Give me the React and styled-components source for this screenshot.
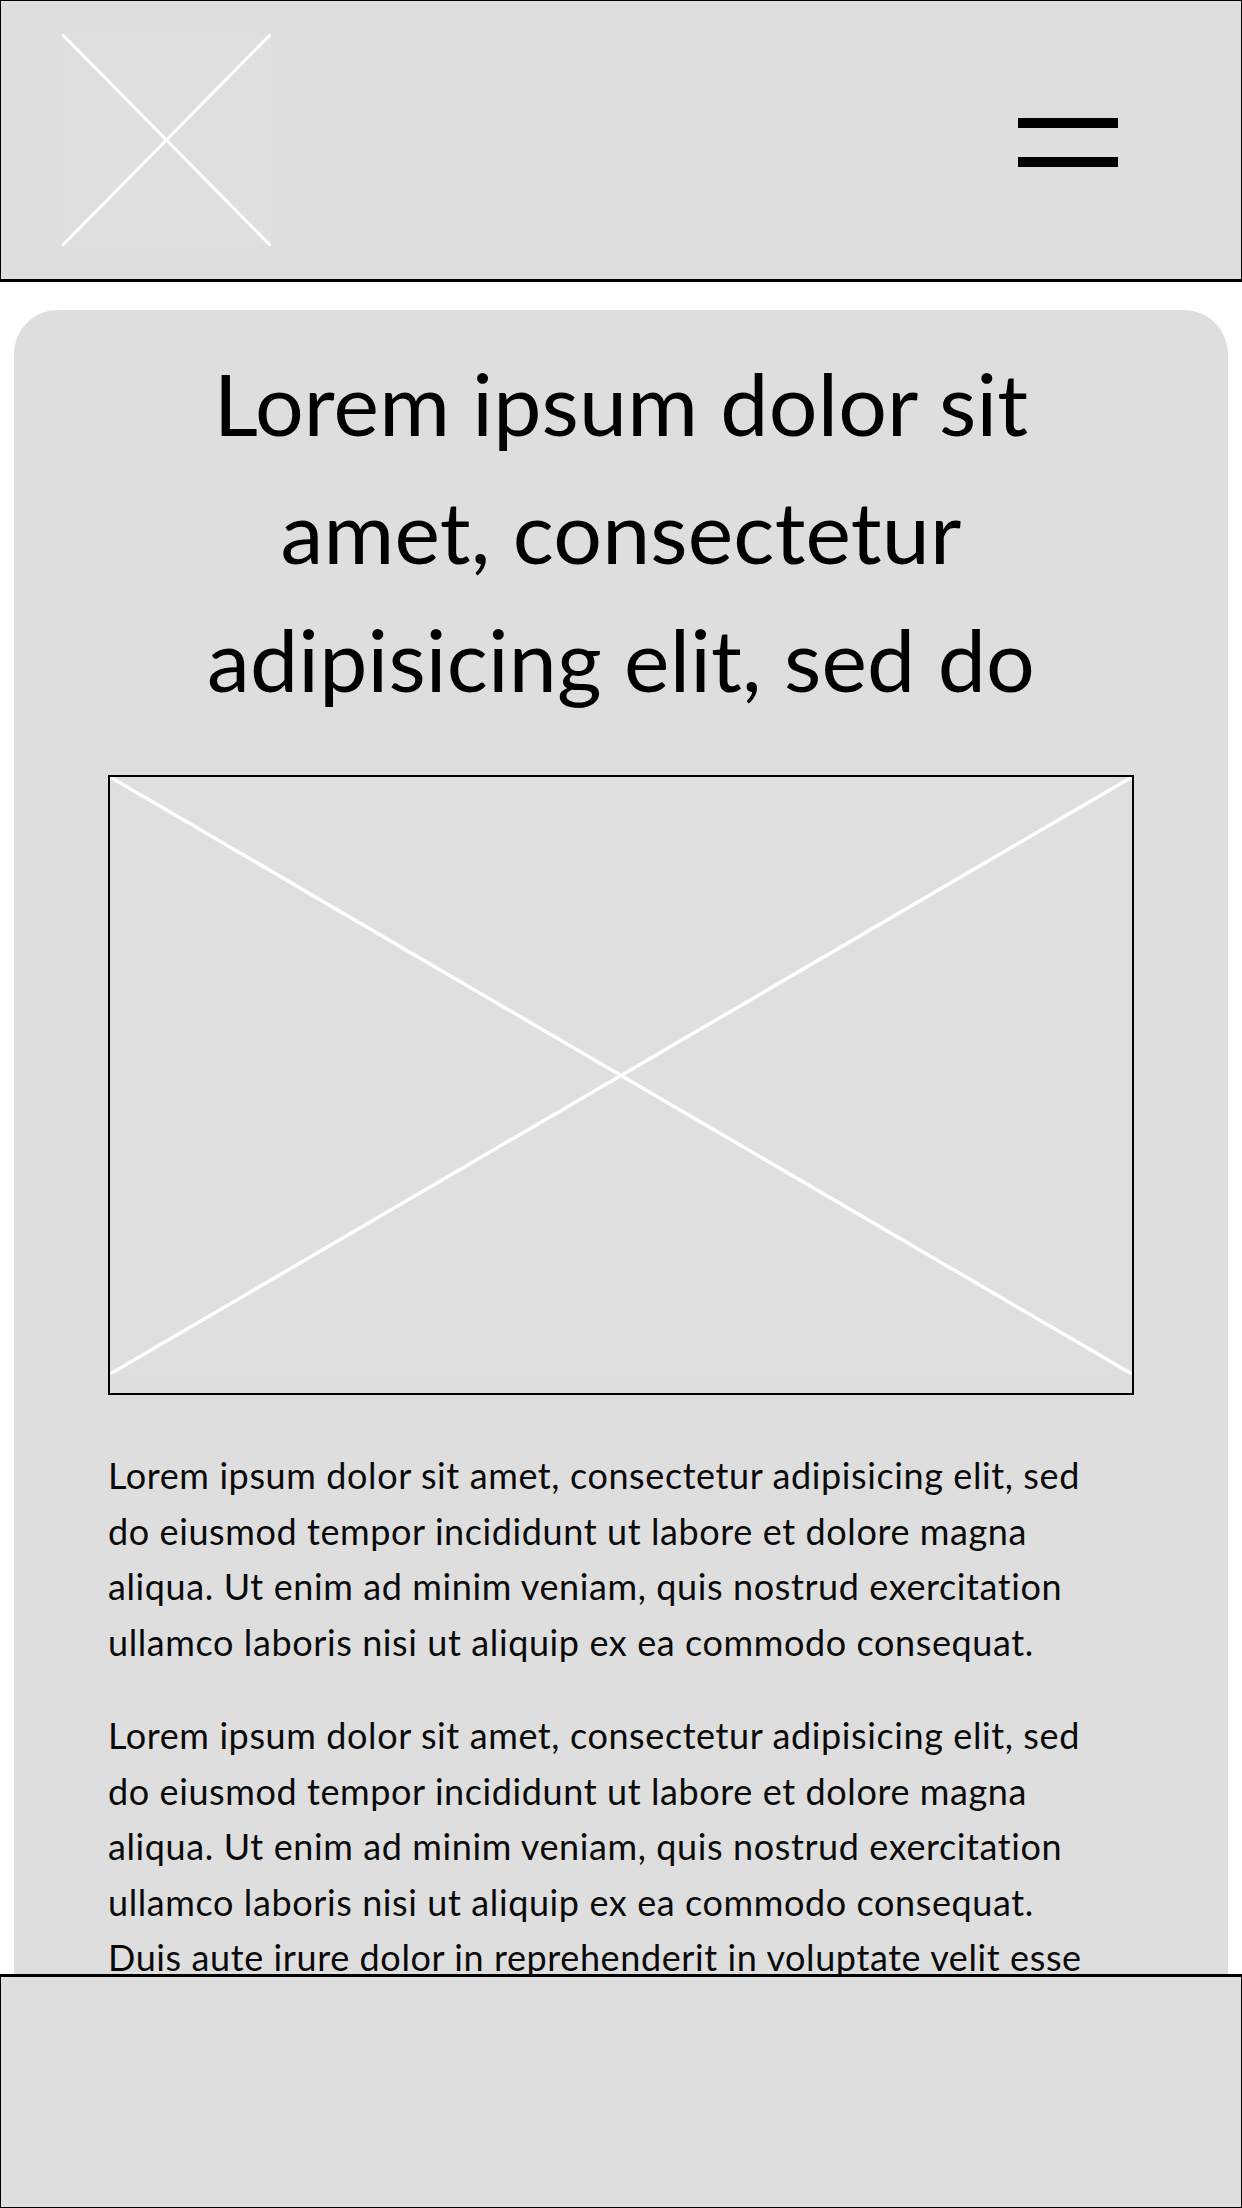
import React from "react";
import styled, { createGlobalStyle } from "styled-components";

const Global = createGlobalStyle`
  html, body { margin: 0; padding: 0; background: #ffffff; }
  body { font-family: Lato, "Open Sans", sans-serif; color: #000; }
  * { box-sizing: border-box; }
`;

const Header = styled.header`
  height: 282px;
  border: 1px solid #000;
  border-bottom-width: 3px;
  background: #dedede;
  display: flex;
  align-items: center;
  justify-content: space-between;
  padding: 0 123px 0 61px;
`;

const Logo = styled.div`
  width: 209px;
  height: 212px;
  background: #e0e0e0;
`;

const Burger = styled.button`
  width: 100px;
  display: flex;
  flex-direction: column;
  gap: 29px;
  margin-top: 5px;
  padding: 0;
  border: 0;
  background: transparent;
`;

const Bar = styled.span`
  display: block;
  height: 10px;
  background: #000;
`;

const Card = styled.main`
  margin: 28px 14px 0;
  background: #dedede;
  border-radius: 44px;
  padding: 29px 94px 300px;
  display: flex;
  flex-direction: column;
`;

const Title = styled.h1`
  margin: 0;
  font-weight: 400;
  font-size: 86px;
  letter-spacing: 0.2px;
  line-height: 128px;
  text-align: center;
  padding: 0 60px;
`;

const Figure = styled.figure`
  margin: 52px 0 0;
  border: 2px solid #000;
  padding-bottom: 19px;
`;

const Placeholder = styled.svg`
  display: block;
  width: 100%;
  height: ${(p) => p.$h}px;
  background: #dfdfdf;
`;

const Para = styled.p`
  margin: ${(p) => (p.$first ? "53px" : "38px")} 30px 0 0;
  font-size: 36px;
  letter-spacing: 0.6px;
  line-height: 55.5px;
  color: #0a0a0a;
`;

const Footer = styled.footer`
  position: fixed;
  left: 0;
  right: 0;
  bottom: 0;
  height: 234px;
  background: #dedede;
  border: 1px solid #000;
  border-top-width: 3px;
`;

const Cross = ({ h, width = 3 }) => (
  <Placeholder $h={h} viewBox="0 0 100 100" preserveAspectRatio="none">
    <line x1="0" y1="0" x2="100" y2="100" stroke="#fff" strokeWidth={width} vectorEffect="non-scaling-stroke" />
    <line x1="100" y1="0" x2="0" y2="100" stroke="#fff" strokeWidth={width} vectorEffect="non-scaling-stroke" />
  </Placeholder>
);

const LOREM =
  "Lorem ipsum dolor sit amet, consectetur adipisicing elit, sed do eiusmod tempor incididunt ut labore et dolore magna aliqua. Ut enim ad minim veniam, quis nostrud exercitation ullamco laboris nisi ut aliquip ex ea commodo consequat.";

export default function App() {
  return (
    <>
      <Global />
      <Header>
        <Logo>
          <Cross h={212} width={3} />
        </Logo>
        <Burger aria-label="Menu">
          <Bar />
          <Bar />
        </Burger>
      </Header>
      <Card>
        <Title>Lorem ipsum dolor sit amet, consectetur adipisicing elit, sed do</Title>
        <Figure>
          <Cross h={597} width={3.5} />
        </Figure>
        <Para $first>{LOREM}</Para>
        <Para>
          {LOREM} Duis aute irure dolor in reprehenderit in voluptate velit esse cillum dolore eu fugiat nulla
          pariatur. Excepteur sint occaecat cupidatat non proident, sunt in culpa qui officia deserunt mollit anim id
          est laborum.
        </Para>
      </Card>
      <Footer />
    </>
  );
}
